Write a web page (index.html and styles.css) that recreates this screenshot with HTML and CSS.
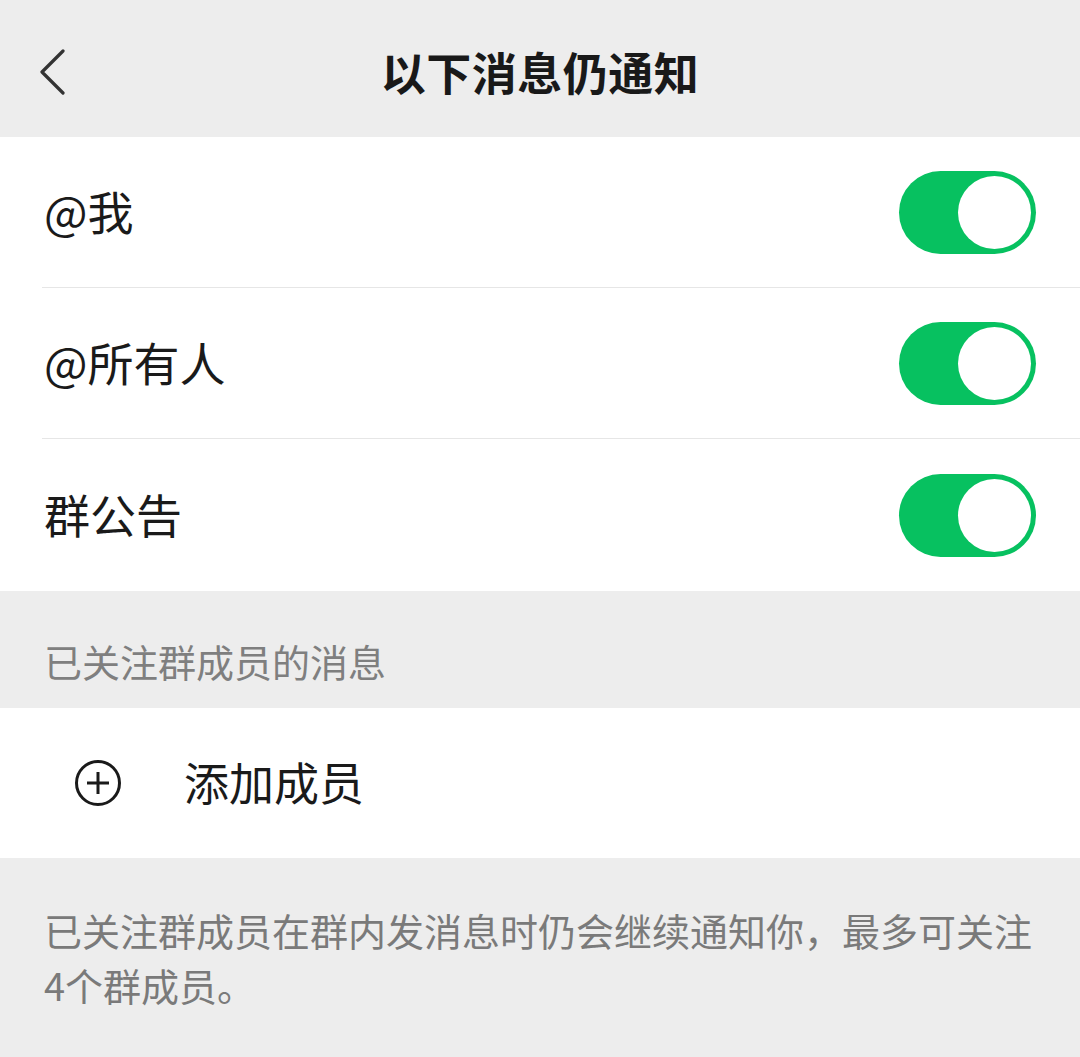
FILE: index.html
```html
<!DOCTYPE html>
<html lang="zh-CN">
<head>
    <meta charset="UTF-8">
    <meta name="viewport" content="width=device-width, initial-scale=1.0">
    <title>以下消息仍通知</title>
    <link rel="stylesheet" href="styles.css">
</head>
<body>
    <header class="nav">
        <button class="back" aria-label="返回">
            <svg width="28" height="46" viewBox="0 0 28 46">
                <path d="M25 2 L4 23 L25 44" fill="none" stroke="#333" stroke-width="3.2" stroke-linecap="round" stroke-linejoin="round"/>
            </svg>
        </button>
        <h1 class="title">以下消息仍通知</h1>
        <span></span>
    </header>

    <ul class="list">
        <li class="row">
            <span class="label">@我</span>
            <span class="switch on"><span class="knob"></span></span>
        </li>
        <li class="row">
            <span class="label">@所有人</span>
            <span class="switch on"><span class="knob"></span></span>
        </li>
        <li class="row">
            <span class="label">群公告</span>
            <span class="switch on"><span class="knob"></span></span>
        </li>
    </ul>

    <div class="section-title">已关注群成员的消息</div>

    <div class="add-row">
        <svg class="plus" width="48" height="48" viewBox="0 0 48 48">
            <circle cx="24" cy="24" r="21.5" fill="none" stroke="#1a1a1a" stroke-width="3"/>
            <path d="M24 13 V35 M13 24 H35" stroke="#1a1a1a" stroke-width="3" fill="none"/>
        </svg>
        <span class="add-label">添加成员</span>
    </div>

    <p class="tip">已关注群成员在群内发消息时仍会继续通知你，最多可关注4个群成员。</p>
</body>
</html>
```

FILE: styles.css
```css
body {
    margin: 0;
    background-color: #ededed;
    font-family: "Noto Sans CJK SC", "Noto Sans", sans-serif;
    color: #1a1a1a;
}

.nav {
    height: 137px;
    display: grid;
    grid-template-columns: 1fr auto 1fr;
    align-items: center;
    background-color: #ededed;
    box-sizing: border-box;
    padding-top: 6px;
}

.back {
    justify-self: start;
    margin-left: 38px;
    padding: 0;
    border: none;
    background: none;
    display: flex;
}

.title {
    margin: 0;
    font-size: 45px;
    font-weight: 700;
    color: #191919;
    letter-spacing: 0.5px;
}

.list {
    list-style: none;
    margin: 0;
    padding: 0 0 0 42px;
    background-color: #fff;
}

.row {
    height: 150px;
    display: flex;
    align-items: center;
    justify-content: space-between;
    padding-right: 44px;
    border-bottom: 1px solid #e6e6e6;
}

.row:last-child {
    border-bottom: none;
    height: 152px;
}

.label {
    font-size: 46px;
    padding-left: 2px;
    padding-bottom: 4px;
}

.switch {
    width: 137px;
    height: 83px;
    border-radius: 42px;
    background-color: #07c160;
    box-sizing: border-box;
    padding: 5px;
    display: flex;
    justify-content: flex-end;
}

.knob {
    width: 73px;
    height: 73px;
    border-radius: 50%;
    background-color: #fff;
}

.section-title {
    font-size: 38px;
    color: #7f7f7f;
    line-height: 53px;
    padding: 43px 44px 21px;
}

.add-row {
    height: 150px;
    background-color: #fff;
    display: flex;
    align-items: center;
    padding-left: 74px;
}

.plus {
    margin-right: 62px;
}

.add-label {
    font-size: 45px;
    padding-bottom: 4px;
}

.tip {
    margin: 0;
    padding: 44px 40px 0 44px;
    font-size: 38px;
    line-height: 55px;
    color: #7a7a7a;
}
```
